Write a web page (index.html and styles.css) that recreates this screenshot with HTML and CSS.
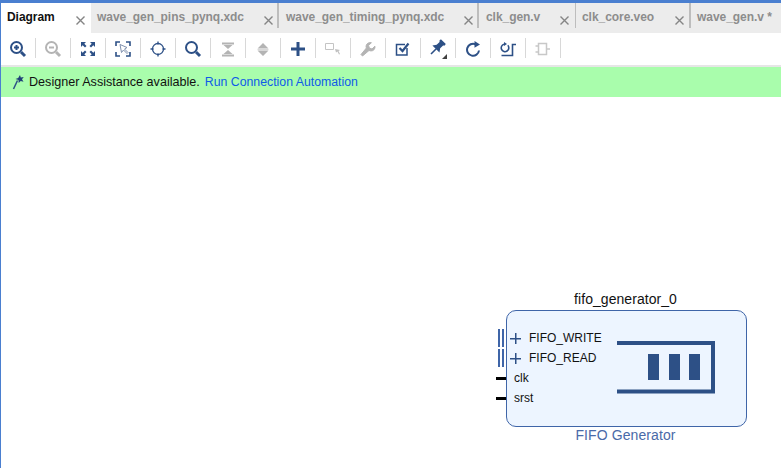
FILE: index.html
```html
<!DOCTYPE html>
<html lang="en">
<head>
  <meta charset="UTF-8" />
  <title>Diagram</title>
  <link rel="stylesheet" href="styles.css">
</head>
<body>
<div class="tabs">
  <div class="tab active w-diagram"><span class="tab-name">Diagram</span><svg class="tab-x" width="9" height="9" viewBox="0 0 9 9"><path d="M0.500 0.500l8 8M8.500 0.500l-8 8"/></svg></div>
  <div class="tab w-pins"><span class="tab-name">wave_gen_pins_pynq.xdc</span><svg class="tab-x" width="9" height="9" viewBox="0 0 9 9"><path d="M0.500 0.500l8 8M8.500 0.500l-8 8"/></svg></div>
  <div class="tab w-timing"><span class="tab-name">wave_gen_timing_pynq.xdc</span><svg class="tab-x" width="9" height="9" viewBox="0 0 9 9"><path d="M0.500 0.500l8 8M8.500 0.500l-8 8"/></svg></div>
  <div class="tab w-clkgen"><span class="tab-name">clk_gen.v</span><svg class="tab-x" width="9" height="9" viewBox="0 0 9 9"><path d="M0.500 0.500l8 8M8.500 0.500l-8 8"/></svg></div>
  <div class="tab w-core"><span class="tab-name">clk_core.veo</span><svg class="tab-x" width="9" height="9" viewBox="0 0 9 9"><path d="M0.500 0.500l8 8M8.500 0.500l-8 8"/></svg></div>
  <div class="tab w-wave"><span class="tab-name">wave_gen.v *</span></div>
</div>

<div class="toolbar">
  <div class="tool"><svg width="18" height="18" viewBox="0 0 18 18"><circle cx="7.500" cy="7.500" r="5.500" class="ln2"/><path d="M5 7.500h5M7.500 5v5" class="ln2"/><path d="M12 12l4 4" class="ln3"/></svg></div>
  <div class="tool"><svg width="18" height="18" viewBox="0 0 18 18"><circle cx="7.500" cy="7.500" r="5.500" class="gr2"/><path d="M5 7.500h5" class="gr2"/><path d="M12 12l4 4" class="gr3"/></svg></div>
  <div class="tool"><svg width="16" height="16" viewBox="0 0 16 16"><path d="M1 1h5L4.300 2.700 6.500 5 5 6.500 2.700 4.300 1 6zM15 1v5l-1.700-1.700L11 6.500 9.500 5l2.200-2.300L10 1zM1 15v-5l1.700 1.700L5 9.500 6.500 11l-2.200 2.300L6 15zM15 15h-5l1.700-1.700L9.500 11 11 9.500l2.300 2.200L15 10z" class="fill"/></svg></div>
  <div class="tool"><svg width="16" height="16" viewBox="0 0 16 16"><path d="M1 5V1h4M11 1h4v4M15 11v4h-4M5 15H1v-4" class="ln1h"/><path d="M5 3.500l1.500 8 2-2.500 3.500 3.500 1-1L9.500 8l2.500-1.500z" fill="#fff" stroke="#7f90ad"/></svg></div>
  <div class="tool"><svg width="16" height="16" viewBox="0 0 16 16"><circle cx="8" cy="8" r="5.500" class="ln1"/><path d="M8 0.500v3M8 12.500v3M0.500 8h3M12.500 8h3" class="ln1"/></svg></div>
  <div class="tool"><svg width="18" height="18" viewBox="0 0 18 18"><circle cx="7.500" cy="7.500" r="5.500" class="ln2"/><path d="M12 12l4 4" class="ln3"/></svg></div>
  <div class="tool"><svg width="16" height="16" viewBox="0 0 16 16"><path d="M2 2.500h12M2 14.500h12" class="gr2"/><path d="M3.500 4h9L8 8zM3.500 13h9L8 9z" fill="#b4b4b4"/></svg></div>
  <div class="tool"><svg width="16" height="16" viewBox="0 0 16 16"><path d="M8 2l5.500 5.500h-11zM8 15l5.500-5.500h-11z" fill="#b4b4b4"/><path d="M2.500 8.500h11" stroke="#d8d8d8"/></svg></div>
  <div class="tool"><svg width="16" height="16" viewBox="0 0 16 16"><path d="M1 8h14M8 1v14" stroke="#2d5086" stroke-width="3" fill="none"/></svg></div>
  <div class="tool"><svg width="18" height="14" viewBox="0 0 18 14"><path d="M1.500 1.500h8v6h-8z" fill="#fff" stroke="#c4c4c4"/><path d="M11 7l5 1-1.500 1 1.500 3-1 .5-1.500-3L12 10.500z" fill="#c0c0c0"/></svg></div>
  <div class="tool"><svg width="16" height="16" viewBox="0 0 16 16"><path d="M1 13.500l1.500 1.500L9 9.500c2.500 1 5 .2 5.800-2.300.2-.7.200-1.300.100-2L12 8l-2.700-1-.7-2.500 2.800-2.800C9.300 1.200 7 2.200 6.300 4.300 5.900 5.400 6 6.200 6.400 7z" fill="#b4b4b4" stroke="#b4b4b4"/></svg></div>
  <div class="tool"><svg width="16" height="16" viewBox="0 0 16 16"><path d="M12 7v7H1.500V3.500H10" fill="none" stroke="#2d5086" stroke-width="1.500"/><path d="M4.500 7l3 3 6-7.500" fill="none" stroke="#2d5086" stroke-width="2.200"/></svg></div>
  <div class="tool"><svg width="20" height="20" viewBox="0 0 20 20"><g transform="rotate(45 9 9)" fill="#2d5086"><path d="M5.500 0h7v2.500h-1V7L14 10.500H4L6.500 7V2.500h-1z"/><path d="M8.200 10h1.600v7.500H8.200z"/></g><path d="M19 15v5h-5z" fill="#404040"/></svg></div>
  <div class="tool"><svg width="16" height="16" viewBox="0 0 16 16"><path d="M14 9.500A6 6 0 1 1 10.500 3.300" class="ln2"/><path d="M9.500 0l5.500 3.500-5.500 3.300z" class="fill"/></svg></div>
  <div class="tool"><svg width="18" height="16" viewBox="0 0 18 16"><path d="M8.800 4.300A3.800 3.800 0 1 1 5 3.200" class="ln1h"/><path d="M5 1l3 2-3 2z" class="fill"/><path d="M2.500 14.500h11V3.500H17" class="ln1h"/></svg></div>
  <div class="tool"><svg width="16" height="16" viewBox="0 0 16 16"><path d="M3.500 2.500h8v11h-8zM0.500 5h3M0.500 11h3M11.500 8H15" fill="none" stroke="#c8c8c8" stroke-width="1.500"/></svg></div>
</div>

<div class="assist">
  <svg class="assist-icon" width="14" height="16" viewBox="0 0 14 16"><path d="M1.500 15L5.500 6.500" stroke="#2d5086" stroke-width="1.500"/><path d="M8 1l.8 2.500 3-.5-1.800 2.200 1.500 2.500-2.800-.8-2 2-.2-2.800L3.500 5l2.700-1z" fill="#1f3f78"/></svg>
  <span class="assist-text">Designer Assistance available.</span>
  <a class="assist-link" href="#">Run Connection Automation</a>
</div>

<div class="canvas">
  <div class="block-title">fifo_generator_0</div>
  <div class="block"></div>
  <div class="block-sub">FIFO Generator</div>

  <div class="bus bus-write"></div>
  <div class="plus plus-write"></div>
  <div class="port port-write">FIFO_WRITE</div>
  <div class="bus bus-read"></div>
  <div class="plus plus-read"></div>
  <div class="port port-read">FIFO_READ</div>

  <div class="wire wire-clk"></div>
  <div class="port port-clk">clk</div>
  <div class="wire wire-srst"></div>
  <div class="port port-srst">srst</div>

  <svg class="fifo-icon" width="98" height="53" viewBox="0 0 98 53">
    <path d="M0 2h96v48.500H0" fill="none" stroke="#2d5086" stroke-width="4"/>
    <path d="M31 13h11v26H31zM52 13h11v26H52zM72 13h11v26H72z" fill="#2d5086"/>
  </svg>
</div>
</body>
</html>
```

FILE: styles.css
```css
html, body { margin: 0; padding: 0; }
body { width: 781px; height: 468px; overflow: hidden; background: #fff; font-family: "Liberation Sans", Arial, sans-serif; font-size: 12px; color: #111; border-top: 3px solid #4a7fd0; box-sizing: border-box; border-left: 1px solid #4a7fd0; }

.tabs { display: flex; height: 30px; background: #ececec; }
.tab { display: flex; align-items: center; box-sizing: border-box; height: 30px; padding: 0 0 2px 6px; font-weight: bold; color: #8d8d8d; position: relative; }
.tab::after { content: ""; position: absolute; right: 0; top: 0; height: 25px; width: 2px; background: #bdbdbd; }
.tab.active { background: #fff; color: #111; padding-left: 6px; }
.tab.active::after, .w-wave::after { display: none; }
.tab-name { flex: 1; white-space: nowrap; letter-spacing: -.05px; }
.tab-x { fill: none; stroke: #858585; stroke-width: 1.400; margin-top: 6px; flex: none; }
.w-diagram { width: 90px; }
.w-diagram .tab-x { margin-right: 6px; }
.w-pins { width: 188px; }
.w-pins .tab-x { margin-right: 6px; }
.w-timing { width: 200px; padding-left: 7px; }
.w-timing .tab-x { margin-right: 6px; }
.w-clkgen { width: 97px; padding-left: 7px; }
.w-clkgen::after { width: 1px; }
.w-clkgen .tab-x { margin-right: 7px; }
.w-core { width: 115px; }
.w-core .tab-x { margin-right: 7px; }
.w-wave { width: 90px; }

.toolbar { display: flex; height: 32px; background: #fff; }
.tool { width: 35px; height: 32px; display: flex; align-items: center; justify-content: center; box-sizing: border-box; padding-right: 1px; background: linear-gradient(#d8d8d8, #d8d8d8) right 5px / 1px 20px no-repeat; }
.ln1 { fill: none; stroke: #2d5086; stroke-width: 1.300; }
.ln1h { fill: none; stroke: #2d5086; stroke-width: 1.600; }
.ln2 { fill: none; stroke: #2d5086; stroke-width: 2; }
.ln3 { fill: none; stroke: #2d5086; stroke-width: 3; }
.gr2 { fill: none; stroke: #b4b4b4; stroke-width: 2; }
.gr3 { fill: none; stroke: #b4b4b4; stroke-width: 3; }
.fill { fill: #2d5086; }

.assist { display: flex; align-items: center; height: 30px; background: #a9fdac; border-top: 2px solid #e6e6e6; padding-left: 11px; }
.assist-icon { margin-right: 3px; }
.assist-text { font-size: 12.600px; white-space: nowrap; }
.assist-link { color: #0f5be8; text-decoration: none; margin-left: 5px; font-size: 12.300px; white-space: nowrap; }

.canvas { position: relative; height: 369px; margin-left: -1px; }
.block { position: absolute; left: 506px; top: 213px; width: 239px; height: 115px; border: 1px solid #3f65a8; border-radius: 10px; background: #edf5ff; }
.block-title { position: absolute; left: 505px; width: 241px; top: 194px; text-align: center; font-size: 14px; letter-spacing: .05px; }
.block-sub { position: absolute; left: 505px; width: 241px; top: 330px; text-align: center; font-size: 14px; letter-spacing: .1px; color: #4a6aa8; }
.bus { position: absolute; left: 498px; height: 18px; width: 2px; border-left: 2px solid #3f65a8; border-right: 2px solid #3f65a8; }
.bus-write { top: 232px; }
.bus-read { top: 252px; }
.plus { position: absolute; left: 510px; width: 11px; height: 11px; background: linear-gradient(#2d5086, #2d5086) center / 11px 1.500px no-repeat, linear-gradient(#2d5086, #2d5086) center / 1.500px 11px no-repeat; }
.plus-write { top: 236px; }
.plus-read { top: 256px; }
.port { position: absolute; font-size: 12px; line-height: 14px; color: #111; }
.port-write { left: 529px; top: 234px; }
.port-read { left: 529px; top: 254px; }
.port-clk { left: 514px; top: 274px; }
.port-srst { left: 514px; top: 294px; }
.wire { position: absolute; left: 496px; width: 10px; height: 3px; background: #000; }
.wire-clk { top: 280px; }
.wire-srst { top: 300px; }
.fifo-icon { position: absolute; left: 617px; top: 244px; }
```
